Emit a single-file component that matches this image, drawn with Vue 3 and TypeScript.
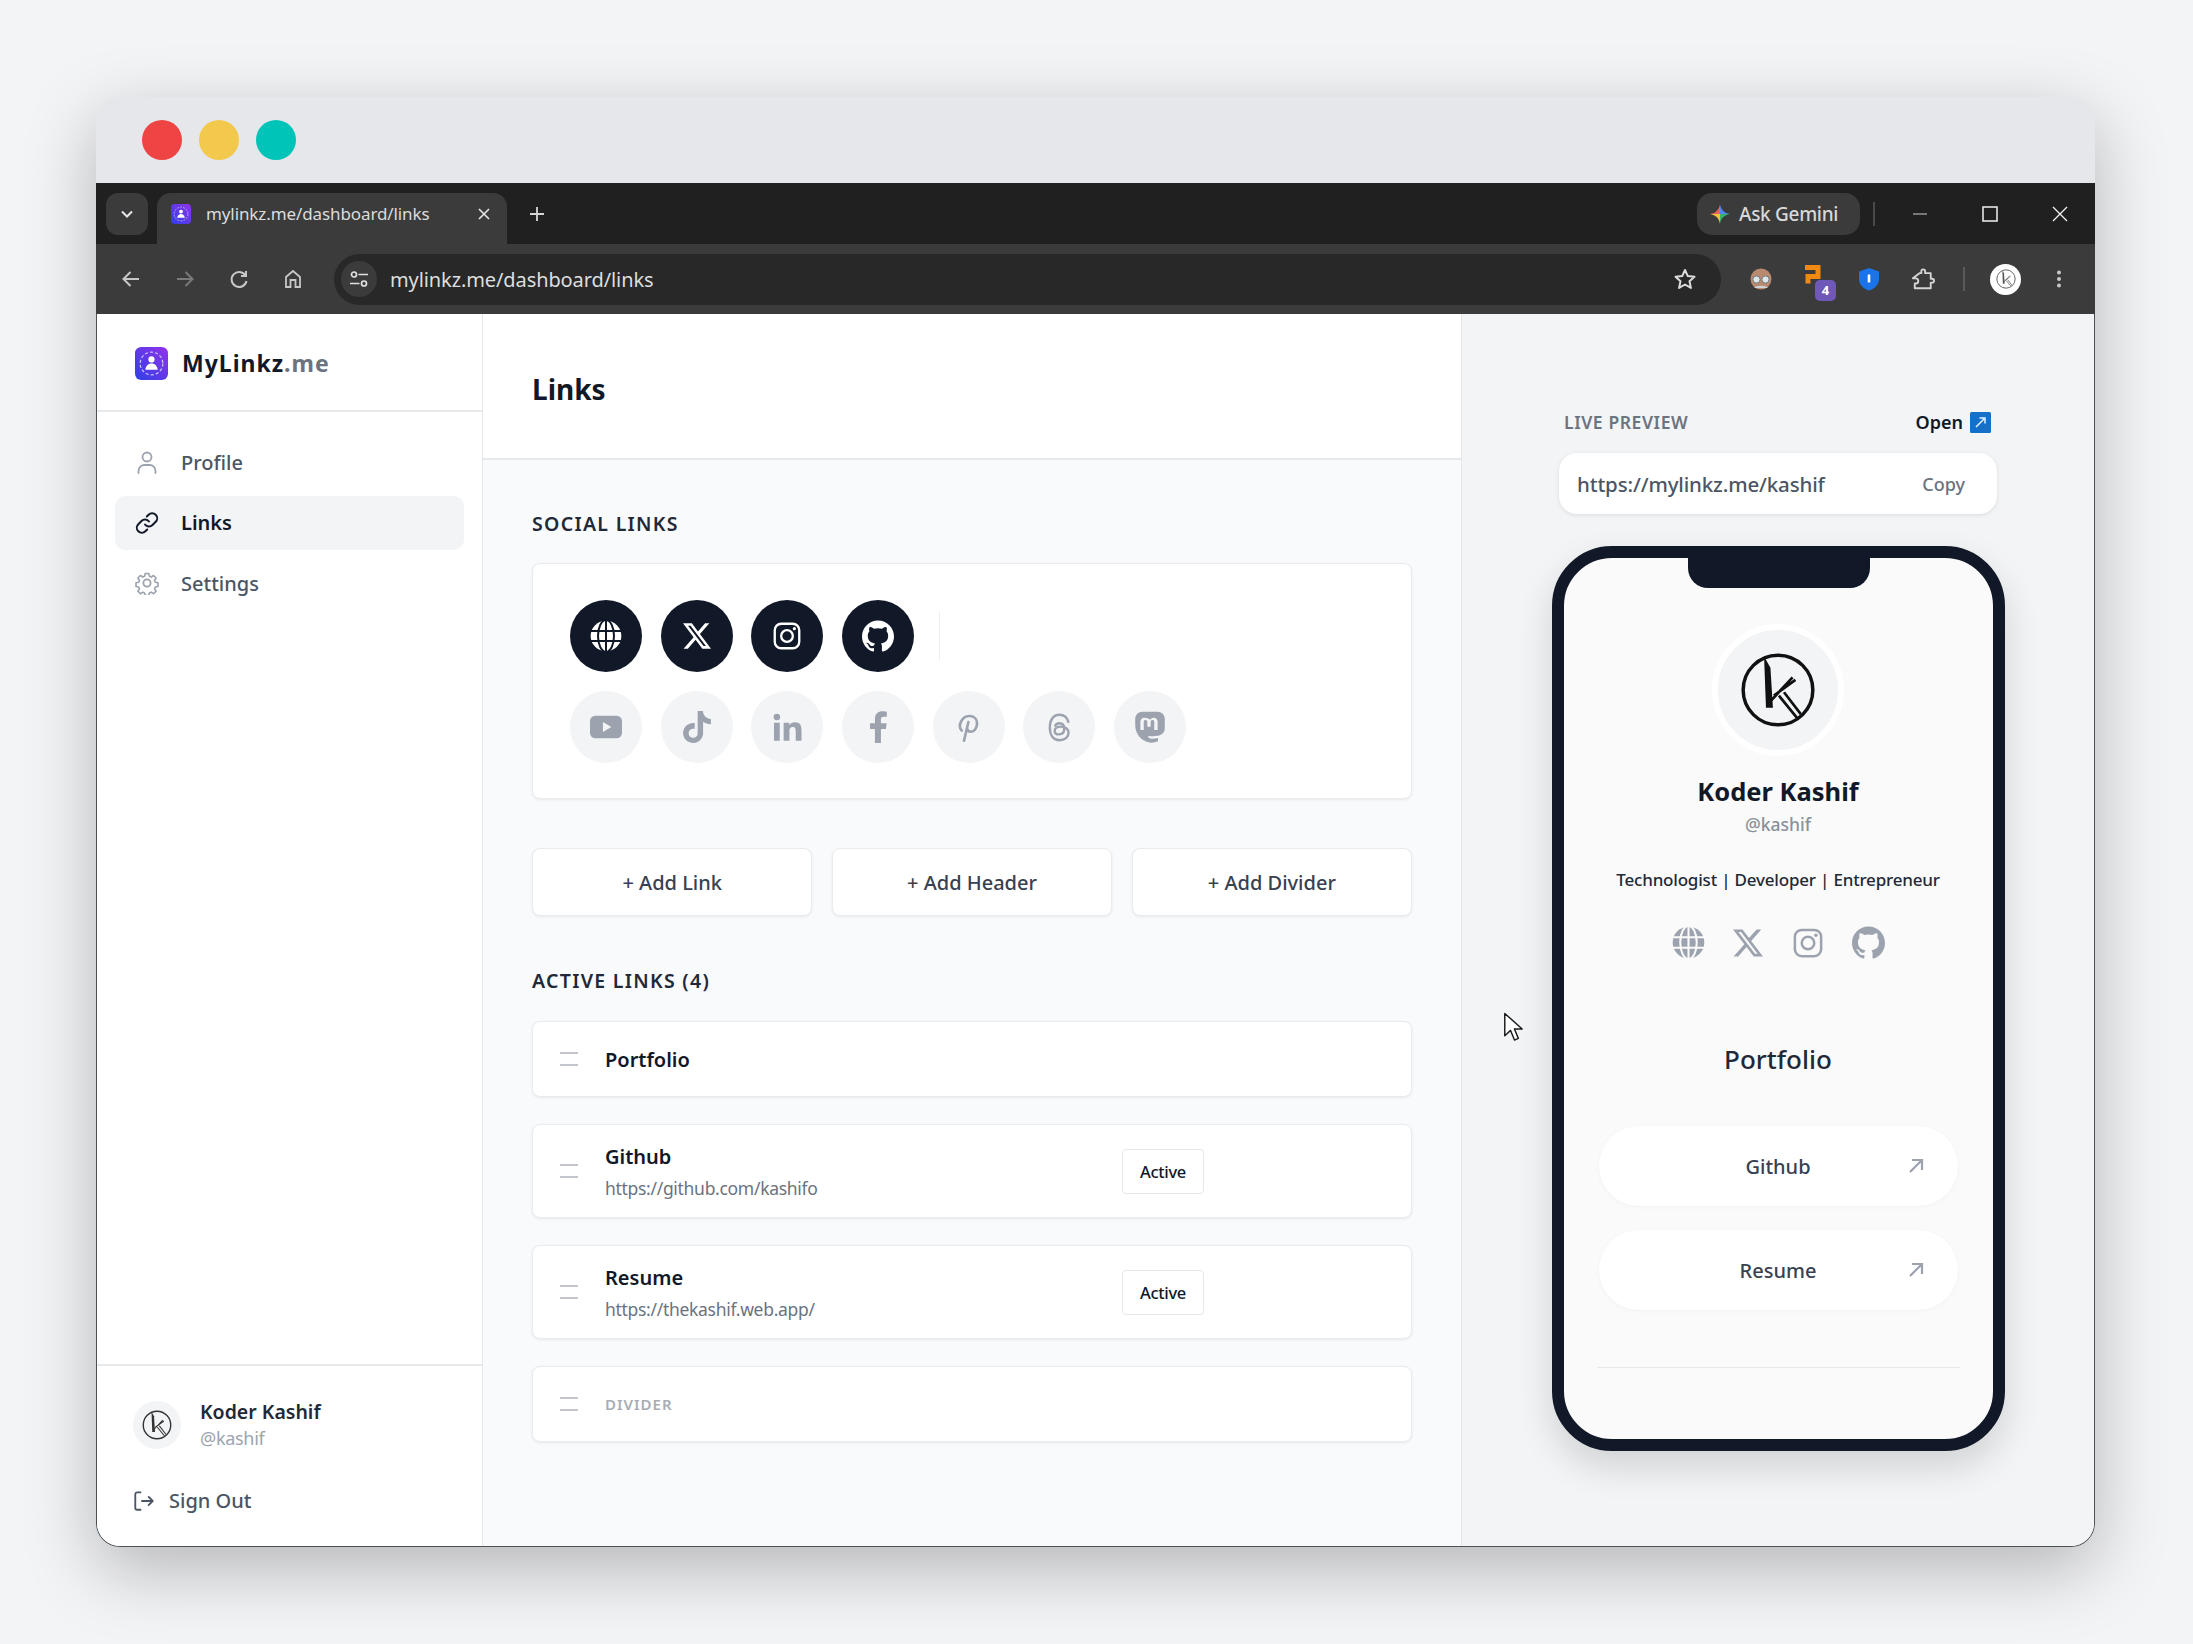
<script setup lang="ts">
const activeSocials = ["globe", "x", "insta", "github"];
const idleSocials = ["youtube", "tiktok", "linkedin", "facebook", "pinterest", "threads", "mastodon"];
const addButtons = ["+ Add Link", "+ Add Header", "+ Add Divider"];

const navItems = [
  { label: "Profile", icon: "user", active: false },
  { label: "Links", icon: "link", active: true },
  { label: "Settings", icon: "gear", active: false },
];

const links = [
  { title: "Github", url: "https://github.com/kashifo" },
  { title: "Resume", url: "https://thekashif.web.app/" },
];
</script>

<template>
  <div class="page">
    <svg class="defs" width="0" height="0" aria-hidden="true">
      <defs>
        <linearGradient id="logo-grad" x1="1" y1="0" x2="0" y2="1">
          <stop offset="0" stop-color="#9333ea" />
          <stop offset="1" stop-color="#2f3fe6" />
        </linearGradient>
        <symbol id="logo" viewBox="0 0 32 32">
          <rect width="32" height="32" rx="6" fill="url(#logo-grad)" />
          <circle cx="16" cy="16" r="11" fill="none" stroke="#c9c6fb" stroke-width="1.2" stroke-dasharray="3 2" />
          <circle cx="16" cy="12" r="3" fill="#fff" />
          <path d="M10 22c.5-4 3-6 6-6s5.500 2 6 6z" fill="#fff" />
        </symbol>
        <symbol id="globe" viewBox="0 0 24 24">
          <circle cx="12" cy="12" r="11.500" fill="currentColor" />
          <g fill="none" stroke="var(--cut)" stroke-width="1.500">
            <path d="M0 8.200h24M0 15.800h24M12 0v24" />
            <ellipse cx="12" cy="12" rx="6" ry="12" />
          </g>
        </symbol>
        <symbol id="x" viewBox="0 0 24 24">
          <path fill="currentColor" d="M18.901 1.153h3.68l-8.04 9.19L24 22.846h-7.406l-5.8-7.584-6.638 7.584H.474l8.6-9.83L0 1.154h7.594l5.243 6.932ZM17.610 20.644h2.039L6.486 3.240H4.298Z" />
        </symbol>
        <symbol id="insta" viewBox="0 0 24 24">
          <rect x="1.500" y="1.500" width="21" height="21" rx="5.500" fill="none" stroke="currentColor" stroke-width="2" />
          <circle cx="12" cy="12" r="5" fill="none" stroke="currentColor" stroke-width="2" />
          <circle cx="18.300" cy="5.700" r="1.400" fill="currentColor" />
        </symbol>
        <symbol id="github" viewBox="0 0 24 24">
          <path fill="currentColor" d="M12 .297c-6.630 0-12 5.373-12 12 0 5.303 3.438 9.800 8.205 11.385.6.113.82-.258.82-.577 0-.285-.01-1.040-.015-2.040-3.338.724-4.042-1.610-4.042-1.610C4.422 18.070 3.633 17.700 3.633 17.700c-1.087-.744.084-.729.084-.729 1.205.084 1.838 1.236 1.838 1.236 1.070 1.835 2.809 1.305 3.495.998.108-.776.417-1.305.76-1.605-2.665-.3-5.466-1.332-5.466-5.930 0-1.310.465-2.380 1.235-3.220-.135-.303-.54-1.523.105-3.176 0 0 1.005-.322 3.300 1.230.96-.267 1.980-.399 3-.405 1.020.006 2.040.138 3 .405 2.280-1.552 3.285-1.230 3.285-1.230.645 1.653.24 2.873.12 3.176.765.84 1.230 1.910 1.230 3.220 0 4.610-2.805 5.625-5.475 5.920.42.36.81 1.096.81 2.220 0 1.606-.015 2.896-.015 3.286 0 .315.21.69.825.57C20.565 22.092 24 17.592 24 12.297c0-6.627-5.373-12-12-12" />
        </symbol>
        <symbol id="youtube" viewBox="0 0 24 24">
          <path fill="currentColor" fill-rule="evenodd" d="M4 3.500h16a4 4 0 0 1 4 4v9a4 4 0 0 1-4 4H4a4 4 0 0 1-4-4v-9a4 4 0 0 1 4-4zM9.700 8.300v7.400L16 12z" />
        </symbol>
        <symbol id="tiktok" viewBox="0 0 24 24">
          <path fill="currentColor" d="M12.525.02c1.310-.02 2.610-.01 3.910-.02.08 1.530.63 3.090 1.750 4.170 1.120 1.110 2.700 1.620 4.240 1.790v4.030c-1.440-.05-2.890-.35-4.200-.97-.57-.26-1.100-.59-1.620-.93-.01 2.920.01 5.840-.02 8.750-.08 1.400-.54 2.790-1.350 3.940-1.310 1.920-3.580 3.170-5.910 3.210-1.430.08-2.860-.31-4.080-1.030-2.020-1.190-3.440-3.370-3.650-5.710-.02-.5-.03-1-.01-1.490.18-1.900 1.120-3.720 2.580-4.960 1.660-1.440 3.980-2.130 6.150-1.720.02 1.480-.04 2.960-.04 4.440-.99-.32-2.150-.23-3.020.37-.63.41-1.110 1.040-1.360 1.750-.21.51-.15 1.070-.14 1.610.24 1.640 1.820 3.020 3.500 2.870 1.120-.01 2.190-.66 2.770-1.610.19-.33.4-.67.41-1.060.1-1.790.06-3.570.07-5.360.01-4.030-.01-8.050.02-12.070z" />
        </symbol>
        <symbol id="linkedin" viewBox="0 0 24 24">
          <circle cx="3.200" cy="3.400" r="2.700" fill="currentColor" />
          <path fill="currentColor" d="M.8 8h4.800v15H.8zM8.800 8h4.600v2.100c.8-1.400 2.400-2.500 4.600-2.500 4.500 0 5.600 2.900 5.600 6.900V23h-4.800v-7.600c0-1.800-.1-3.800-2.400-3.800-2.400 0-2.800 1.800-2.800 3.700V23H8.800z" />
        </symbol>
        <symbol id="facebook" viewBox="0 0 24 24">
          <path fill="currentColor" d="M14.200 24V13.500h3.700l.6-4.300h-4.300V6.500c0-1.200.4-2.100 2.200-2.100h2.200V.5C18.200.4 16.900.2 15.400.2c-3.300 0-5.700 2-5.700 5.800v3.200H6v4.300h3.700V24z" />
        </symbol>
        <symbol id="pinterest" viewBox="0 0 24 24">
          <path fill="none" stroke="currentColor" stroke-width="2.200" stroke-linecap="round" d="M6.400 14.500C4.700 12.800 4.600 9.600 5.900 7c1.500-3 4.300-4.700 7.300-4.500 3.700.3 6 2.900 5.900 6.300-.1 3.700-2.400 6.900-5.300 6.700-1.700-.1-2.800-1.300-3-2.700M11.900 7.500 8.300 23" />
        </symbol>
        <symbol id="threads" viewBox="0 0 24 24">
          <path fill="none" stroke="currentColor" stroke-width="2" stroke-linecap="round" d="M19.300 7.400C18.300 3.800 15.600 1.500 12 1.500 6.900 1.500 4 5.700 4 12s2.900 10.500 8 10.500c4.400 0 7.500-2.600 7.500-6 0-3.300-2.800-5.200-6.600-5.200-2.900 0-4.900 1.300-4.900 3.300s1.700 3.100 3.700 3.100c2.700 0 4.200-1.800 4.200-4.600 0-2.600-1.300-4.600-3.900-4.600-1.700 0-2.900.7-3.600 1.900" />
        </symbol>
        <symbol id="mastodon" viewBox="0 0 24 24">
          <path fill="currentColor" fill-rule="evenodd" d="M6.500.6h11c3.300 0 5.600 2.300 5.600 5.500v6.700c0 3.300-2.200 5.300-5.300 5.800-2.400.4-5 .4-7.300-.1.100 1.400 1.100 2.300 3 2.300 1.600 0 3.100-.2 4.500-.6v2.500c-2.100 1-4.900 1.300-7.200.8C6 22 3.400 19.600 1.800 15.400 1 13.500.9 11.100.9 8.200V6.100C.9 2.900 3.200.6 6.500.6zM7.700 5c-1.800 0-2.900 1.300-2.900 3.100v6.200h2.500V8.300c0-1 .5-1.500 1.300-1.500.9 0 1.400.6 1.400 1.700v3.300h2.500V8.500c0-1.100.5-1.700 1.400-1.700.8 0 1.300.5 1.300 1.500v6h2.500V8.100C17.700 6.300 16.600 5 14.800 5c-1.300 0-2.100.6-2.600 1.500C11.700 5.600 9.100 5 7.700 5z" />
        </symbol>
        <symbol id="user" viewBox="0 0 24 24">
          <g fill="none" stroke="currentColor" stroke-width="1.800" stroke-linecap="round">
            <circle cx="12" cy="7" r="4.500" />
            <path d="M3.500 23v-2c0-3.500 2.800-6 6-6h5c3.200 0 6 2.500 6 6v2" />
          </g>
        </symbol>
        <symbol id="link" viewBox="0 0 24 24">
          <g fill="none" stroke="currentColor" stroke-width="2" stroke-linecap="round" stroke-linejoin="round">
            <path d="M10 13.500a5 5 0 0 0 7.500.5l3.200-3.200a5 5 0 0 0-7.100-7.100L11.800 5.500" />
            <path d="M14 10.500a5 5 0 0 0-7.500-.5l-3.200 3.200a5 5 0 0 0 7.100 7.100l1.800-1.800" />
          </g>
        </symbol>
        <symbol id="gear" viewBox="0 0 24 24">
          <g fill="none" stroke="currentColor" stroke-width="1.800" stroke-linejoin="round">
            <path d="M10 1.500h4l.7 3.100 1.900.8 2.700-1.700 2.800 2.800-1.700 2.700.8 1.900 3 .7v4l-3 .7-.8 1.900 1.700 2.700-2.800 2.800-2.700-1.700-1.900.8-.7 3h-4l-.7-3-1.900-.8-2.700 1.700-2.800-2.800 1.700-2.700-.8-1.900-3-.7v-4l3-.7.8-1.900-1.700-2.700 2.800-2.800 2.700 1.700 1.900-.8z" transform="translate(1.200 1.200) scale(.9)" />
            <circle cx="12" cy="12" r="3.600" />
          </g>
        </symbol>
        <symbol id="kay" viewBox="0 0 24 24">
          <circle cx="12" cy="12" r="11" fill="none" stroke="currentColor" stroke-width="1.100" />
          <path fill="currentColor" d="M7.600 1.400 9.600 5l.8 12.600H8.200z" />
          <g fill="none" stroke="currentColor" stroke-width=".85">
            <path d="M9.200 16 16.600 8M10.700 13.800 17.500 8.800M12.300 13.800 18 20.800M13.900 12.700 19.200 19.600" />
          </g>
        </symbol>
      </defs>
    </svg>

    <div class="window">
      <div class="titlebar">
        <span class="dot red"></span>
        <span class="dot yellow"></span>
        <span class="dot teal"></span>
      </div>

      <div class="tabstrip">
        <div class="tab-search">
          <svg viewBox="0 0 16 16" width="16" height="16"><path d="M3 5.500l5 5 5-5" fill="none" stroke="#e3e6ea" stroke-width="2" /></svg>
        </div>
        <div class="tab">
          <svg class="tab-favicon" width="20" height="20"><use href="#logo" /></svg>
          <span class="tab-title">mylinkz.me/dashboard/links</span>
          <svg viewBox="0 0 12 12" width="12" height="12"><path d="M1 1l10 10M11 1L1 11" stroke="#e3e3e3" stroke-width="1.700" /></svg>
        </div>
        <svg class="tab-plus" viewBox="0 0 16 16" width="16" height="16"><path d="M8 1v14M1 8h14" stroke="#d5d5d5" stroke-width="1.800" /></svg>
        <div class="grow"></div>
        <div class="gemini">
          <svg viewBox="0 0 24 24" width="22" height="22">
            <path d="M12 1c.8 6 4.500 10 11 11H12z" fill="#4f86f7" />
            <path d="M12 1c-.8 6-4.500 10-11 11h11z" fill="#e8645a" />
            <path d="M1 12c6.500 1 10.200 5 11 11V12z" fill="#f3c23c" />
            <path d="M23 12c-6.500 1-10.200 5-11 11V12z" fill="#37b36b" />
          </svg>
          <span>Ask Gemini</span>
        </div>
        <span class="strip-sep"></span>
        <div class="win-ctl first">
          <svg viewBox="0 0 16 16" width="16" height="16"><path d="M1 8h14" stroke="#8f8f8f" stroke-width="1.600" /></svg>
        </div>
        <div class="win-ctl">
          <svg viewBox="0 0 16 16" width="16" height="16"><rect x="1" y="1" width="14" height="14" fill="none" stroke="#f2f2f2" stroke-width="1.500" /></svg>
        </div>
        <div class="win-ctl">
          <svg viewBox="0 0 16 16" width="16" height="16"><path d="M1 1l14 14M15 1L1 15" stroke="#f2f2f2" stroke-width="1.300" /></svg>
        </div>
      </div>

      <div class="toolbar">
        <div class="tool-btn">
          <svg viewBox="0 0 20 20" width="20" height="20"><path d="M18 10H3M9.500 3 2.500 10l7 7" fill="none" stroke="#c7c7c7" stroke-width="2" /></svg>
        </div>
        <div class="tool-btn">
          <svg viewBox="0 0 20 20" width="20" height="20"><path d="M2 10h15M10.500 3l7 7-7 7" fill="none" stroke="#7a7a7a" stroke-width="2" /></svg>
        </div>
        <div class="tool-btn">
          <svg viewBox="0 0 20 20" width="20" height="20"><path d="M16.500 6.500A7.500 7.500 0 1 0 17.500 12M17 2v5h-5" fill="none" stroke="#c7c7c7" stroke-width="2" /></svg>
        </div>
        <div class="tool-btn">
          <svg viewBox="0 0 20 20" width="20" height="20"><path d="M3 18V8l7-6 7 6v10h-4.500v-7h-5v7z" fill="none" stroke="#c7c7c7" stroke-width="1.800" /></svg>
        </div>
        <div class="omnibox">
          <div class="tune">
            <svg viewBox="0 0 20 20" width="20" height="20">
              <g fill="none" stroke="#e0e0e0" stroke-width="1.700">
                <circle cx="5" cy="5.500" r="2.500" /><path d="M9.500 5.500H19M1 14.500h9.500" /><circle cx="15" cy="14.500" r="2.500" />
              </g>
            </svg>
          </div>
          <span class="omni-url">mylinkz.me/dashboard/links</span>
          <div class="grow"></div>
          <svg class="omni-star" viewBox="0 0 24 24" width="24" height="24"><path d="M12 3l2.800 6.100 6.700.7-5 4.500 1.400 6.600-5.900-3.400-5.900 3.400 1.400-6.600-5-4.500 6.700-.7z" fill="none" stroke="#dcdcdc" stroke-width="2" stroke-linejoin="round" /></svg>
        </div>
        <div class="ext first">
          <svg viewBox="0 0 24 24" width="24" height="24">
            <circle cx="12" cy="12" r="10.500" fill="#b98a70" />
            <circle cx="7.500" cy="12.500" r="3.600" fill="#dfe7e8" stroke="#6b7f86" />
            <circle cx="16.500" cy="12.500" r="3.600" fill="#dfe7e8" stroke="#6b7f86" />
            <path d="M5 21c2-3 12-3 14 0z" fill="#cfd6d8" />
          </svg>
        </div>
        <div class="ext">
          <svg class="ext-a" viewBox="0 0 24 24" width="24" height="24"><path d="M5 3.500h13v9H8v7" fill="none" stroke="#f08a13" stroke-width="5" /></svg>
          <span class="ext-badge">4</span>
        </div>
        <div class="ext">
          <svg viewBox="0 0 24 24" width="24" height="24"><path d="M12 1l10 3.500v7c0 6-4 10-10 12C6 21.500 2 17.500 2 11.500v-7z" fill="#1a73e8" /><path d="M12 7.500v8" stroke="#fff" stroke-width="2.600" /></svg>
        </div>
        <div class="ext">
          <svg viewBox="0 0 24 24" width="24" height="24"><path d="M9 5.500h2V3.500a2 2 0 0 1 4 0v2h6v6h1.500a2 2 0 0 1 0 4H21v6H4v-5h1a2.500 2.500 0 0 0 0-5.500H2z" transform="translate(0 1) scale(.94)" fill="none" stroke="#d4d4d4" stroke-width="2" stroke-linejoin="round" /></svg>
        </div>
        <span class="tool-sep"></span>
        <div class="profile">
          <svg width="20" height="20"><use href="#kay" /></svg>
        </div>
        <div class="ext">
          <svg viewBox="0 0 6 20" width="6" height="20"><g fill="#c7c7c7"><circle cx="3" cy="3.500" r="2" /><circle cx="3" cy="10" r="2" /><circle cx="3" cy="16.500" r="2" /></g></svg>
        </div>
      </div>

      <div class="app">
        <aside class="sidebar">
          <div class="brand">
            <svg width="33" height="33"><use href="#logo" /></svg>
            <span class="brand-name">MyLinkz<em>.me</em></span>
          </div>
          <nav class="nav">
            <a v-for="n in navItems" :key="n.label" :class="['nav-item', { active: n.active }]">
              <svg width="24" height="24"><use :href="'#' + n.icon" /></svg>
              <span>{{ n.label }}</span>
            </a>
          </nav>
          <div class="side-foot">
            <div class="me">
              <div class="me-avatar"><svg width="30" height="30"><use href="#kay" /></svg></div>
              <div>
                <div class="me-name">Koder Kashif</div>
                <div class="me-handle">@kashif</div>
              </div>
            </div>
            <a class="signout">
              <svg viewBox="0 0 24 24" width="22" height="22"><path d="M9 2.500H4.500a2 2 0 0 0-2 2v15a2 2 0 0 0 2 2H9M9 12h12M16.500 7l5 5-5 5" fill="none" stroke="#4b5563" stroke-width="2" stroke-linejoin="round" /></svg>
              <span>Sign Out</span>
            </a>
          </div>
        </aside>

        <main class="main">
          <header class="main-head"><h1>Links</h1></header>
          <div class="main-body">
            <h2 class="section-title">SOCIAL LINKS</h2>
            <section class="card socials">
              <div class="social-row">
                <span v-for="s in activeSocials" :key="s" class="social on">
                  <svg :class="'ic-' + s"><use :href="'#' + s" /></svg>
                </span>
                <span class="social-sep"></span>
              </div>
              <div class="social-row">
                <span v-for="s in idleSocials" :key="s" class="social">
                  <svg :class="'ic-' + s"><use :href="'#' + s" /></svg>
                </span>
              </div>
            </section>

            <div class="adders">
              <button v-for="b in addButtons" :key="b" class="card adder">{{ b }}</button>
            </div>

            <h2 class="section-title second">ACTIVE LINKS (4)</h2>
            <div class="rows">
              <div class="card row short">
                <span class="grip"></span>
                <span class="row-title">Portfolio</span>
              </div>
              <div v-for="l in links" :key="l.title" class="card row tall">
                <span class="grip"></span>
                <div class="row-text">
                  <div class="row-title">{{ l.title }}</div>
                  <div class="row-url">{{ l.url }}</div>
                </div>
                <button class="active-btn">Active</button>
              </div>
              <div class="card row short">
                <span class="grip"></span>
                <span class="row-divider">DIVIDER</span>
              </div>
            </div>
          </div>
        </main>

        <aside class="preview">
          <div class="preview-head">
            <span class="preview-label">LIVE PREVIEW</span>
            <a class="preview-open">
              Open
              <svg viewBox="0 0 21 21" width="21" height="21">
                <rect width="21" height="21" rx="1.500" fill="#1470c8" />
                <path d="M6 15l8-8M9.500 6H15v5.500" fill="none" stroke="#e8f2fb" stroke-width="1.500" />
              </svg>
            </a>
          </div>
          <div class="url-box">
            <span class="url-text">https://mylinkz.me/kashif</span>
            <span class="url-copy">Copy</span>
          </div>

          <div class="phone">
            <div class="notch"></div>
            <div class="avatar"><svg width="76" height="76"><use href="#kay" /></svg></div>
            <div class="p-name">Koder Kashif</div>
            <div class="p-handle">@kashif</div>
            <div class="p-bio">Technologist | Developer | Entrepreneur</div>
            <div class="p-icons">
              <span v-for="s in activeSocials" :key="s" class="p-icon">
                <svg :class="'pi-' + s"><use :href="'#' + s" /></svg>
              </span>
            </div>
            <div class="p-header">Portfolio</div>
            <div v-for="l in links" :key="l.title" class="p-link">
              <span>{{ l.title }}</span>
              <svg class="p-arrow" viewBox="0 0 16 16" width="16" height="16"><path d="M2 14 14 2M4 2h10v10" fill="none" stroke="#9ca3af" stroke-width="2.200" /></svg>
            </div>
            <div class="p-rule"></div>
          </div>
        </aside>
      </div>

      <svg class="cursor" viewBox="0 0 20 32" width="20" height="31">
        <path d="M1.500 1.500v23l6-5.500 4 10 4-1.800-4-9.700h8z" fill="#fff" stroke="#1b1b1b" stroke-width="1.500" stroke-linejoin="round" />
      </svg>
    </div>
  </div>
</template>

<style>
html, body { margin: 0; background: #f3f4f6; }
</style>

<style scoped>
.page {
  width: 2193px;
  height: 1644px;
  padding: 97px 98px 97px 96px;
  box-sizing: border-box;
  background: #f3f4f6;
  font-family: "Noto Sans", "Open Sans", sans-serif;
  overflow: hidden;
}
.defs { position: absolute; }
.grow { flex: 1; }

.window {
  position: relative;
  height: 1450px;
  border-radius: 24px;
  display: flex;
  flex-direction: column;
  background: #e5e7eb;
  box-shadow: 0 22px 70px rgba(0, 0, 0, 0.26);
}

.titlebar {
  height: 86px;
  display: flex;
  align-items: center;
  gap: 17px;
  padding-left: 46px;
  background: #e5e7eb;
  border-radius: 24px 24px 0 0;
}
.dot { width: 40px; height: 40px; border-radius: 50%; }
.red { background: #ef4444; }
.yellow { background: #f2c94c; }
.teal { background: #00c4b8; }

.tabstrip {
  height: 61px;
  box-sizing: border-box;
  padding-top: 10px;
  padding-left: 10px;
  display: flex;
  align-items: flex-start;
  background: #202020;
  color: #e3e3e3;
}
.tab-search {
  width: 42px;
  height: 42px;
  margin-right: 9px;
  border-radius: 12px;
  background: #3b3b3b;
  display: flex;
  align-items: center;
  justify-content: center;
}
.tab {
  width: 350px;
  height: 51px;
  box-sizing: border-box;
  padding: 0 17px 10px 14px;
  display: flex;
  align-items: center;
  border-radius: 14px 14px 0 0;
  background: #3b3b3b;
  font-size: 17px;
}
.tab-title { margin-left: 15px; flex: 1; color: #dcdcdc; letter-spacing: -0.1px; }
.tab-plus { margin: 13px 0 0 22px; }
.gemini {
  height: 42px;
  padding: 0 0 0 12px;
  box-sizing: border-box;
  width: 163px;
  display: flex;
  align-items: center;
  gap: 8px;
  border-radius: 15px;
  background: #3b3b3b;
  font-size: 19px;
  font-weight: 500;
  color: #d8d8d8;
  letter-spacing: -0.3px;
  white-space: nowrap;
}
.strip-sep { width: 2px; height: 24px; margin: 9px 0 0 13px; background: #4a4a4a; }
.win-ctl {
  width: 70px;
  height: 42px;
  display: flex;
  align-items: center;
  justify-content: center;
}
.win-ctl.first { margin-left: 10px; }

.toolbar {
  height: 70px;
  box-sizing: border-box;
  padding-left: 17px;
  display: flex;
  align-items: center;
  gap: 18px;
  background: #3b3b3b;
}
.tool-btn, .ext {
  position: relative;
  width: 36px;
  height: 36px;
  flex: none;
  display: flex;
  align-items: center;
  justify-content: center;
}
.ext.first { margin-left: 2px; }
.omnibox {
  width: 1387px;
  height: 51px;
  margin-left: 5px;
  margin-right: 2px;
  box-sizing: border-box;
  padding: 0 24px 0 7px;
  display: flex;
  align-items: center;
  flex: none;
  border-radius: 26px;
  background: #282828;
}
.tune {
  width: 36px;
  height: 36px;
  border-radius: 50%;
  background: #3b3b3b;
  display: flex;
  align-items: center;
  justify-content: center;
}
.omni-url { margin-left: 13px; font-size: 20px; color: #dedede; letter-spacing: -0.1px; }
.ext-a { margin: -6px 0 0 -6px; }
.ext-badge {
  position: absolute;
  right: -3px;
  bottom: -4px;
  width: 21px;
  height: 21px;
  border-radius: 5px;
  background: #7058b8;
  color: #fff;
  font-size: 13px;
  font-weight: 700;
  text-align: center;
  line-height: 21px;
}
.tool-sep { width: 2px; height: 24px; background: #5a5a5a; flex: none; margin: 0 2px 0 4px; }
.profile {
  width: 31px;
  height: 31px;
  margin-left: 5px;
  border-radius: 50%;
  flex: none;
  background: #fff;
  color: #555;
  display: flex;
  align-items: center;
  justify-content: center;
}
.profile + .ext { margin-left: 2px; }

.app {
  flex: 1;
  min-height: 0;
  display: flex;
  background: #fff;
  border: 1px solid #4b5155;
  border-top: 0;
  border-radius: 0 0 24px 24px;
  overflow: hidden;
}

.sidebar {
  width: 385px;
  flex: none;
  display: flex;
  flex-direction: column;
  border-right: 1px solid #e5e7eb;
  background: #fff;
}
.brand {
  height: 98px;
  box-sizing: border-box;
  padding: 2px 0 0 38px;
  display: flex;
  align-items: center;
  gap: 14px;
  border-bottom: 2px solid #e8e9eb;
}
.brand-name { font-size: 23px; font-weight: 700; color: #111827; letter-spacing: 1px; }
.brand-name em { font-style: normal; color: #6b7280; }
.nav {
  flex: 1;
  padding: 23px 18px 0;
  display: flex;
  flex-direction: column;
  gap: 6.500px;
}
.nav-item {
  height: 54px;
  padding-left: 20px;
  display: flex;
  align-items: center;
  gap: 22px;
  border-radius: 10px;
  font-size: 20px;
  font-weight: 500;
  color: #4b5563;
}
.nav-item svg { color: #9ca3af; }
.nav-item.active { background: #f3f4f6; color: #111827; font-weight: 600; }
.nav-item.active svg { color: #111827; }

.side-foot { border-top: 2px solid #e8e9eb; height: 182px; box-sizing: border-box; padding: 32px 36px 0; }
.me { display: flex; align-items: center; gap: 19px; }
.me-avatar {
  width: 48px;
  height: 48px;
  border-radius: 50%;
  background: #f3f4f6;
  color: #333;
  display: flex;
  align-items: center;
  justify-content: center;
}
.me-name { font-size: 19.500px; font-weight: 600; color: #1f2937; line-height: 27px; }
.me-handle { font-size: 18px; color: #9ca3af; line-height: 27px; letter-spacing: -0.3px; }
.signout {
  margin-top: 35px;
  display: flex;
  align-items: center;
  gap: 14px;
  font-size: 20px;
  font-weight: 500;
  color: #4b5563;
}

.main {
  width: 978px;
  flex: none;
  display: flex;
  flex-direction: column;
  background: #f9fafb;
}
.main-head {
  height: 146px;
  box-sizing: border-box;
  display: flex;
  align-items: center;
  padding: 5px 49px 0;
  background: #fff;
  border-bottom: 2px solid #e8e9eb;
}
h1 { margin: 0; font-size: 28px; font-weight: 700; color: #111827; }
.main-body { padding: 50px 49px 0; }
.section-title {
  margin: 0 0 25px;
  height: 28px;
  line-height: 28px;
  font-size: 19.500px;
  font-weight: 600;
  color: #1f2937;
  letter-spacing: 1.300px;
}
.section-title.second { margin: 51px 0 26px; }
.card {
  box-sizing: border-box;
  background: #fff;
  border: 1px solid #e9ebee;
  border-radius: 8px;
  box-shadow: 0 1px 3px rgba(0, 0, 0, 0.07);
}
.socials { height: 236px; padding: 36px 37px; display: flex; flex-direction: column; gap: 19px; }
.social-row { display: flex; gap: 18.700px; align-items: center; }
.social {
  width: 72px;
  height: 72px;
  border-radius: 50%;
  flex: none;
  background: #f3f4f6;
  color: #9ca3af;
  --cut: #f3f4f6;
  display: flex;
  align-items: center;
  justify-content: center;
}
.social.on { background: #111827; color: #fff; --cut: #111827; }
.social-sep { width: 1px; height: 48px; margin-left: 6px; background: #eceef0; }
.social svg { width: 32px; height: 32px; }
.social .ic-x, .social .ic-insta { width: 28px; height: 28px; }
.social .ic-linkedin, .social .ic-pinterest, .social .ic-threads { width: 29px; height: 29px; }
.adders { display: flex; gap: 19.500px; margin-top: 49px; }
.adder {
  flex: 1;
  height: 68px;
  font: 500 20px "Noto Sans", sans-serif;
  color: #374151;
}
.rows { display: flex; flex-direction: column; gap: 27px; }
.row { display: flex; align-items: center; padding: 0 27px; }
.row.short { height: 76px; }
.row.tall { height: 94px; }
.grip {
  width: 18px;
  height: 10px;
  flex: none;
  margin-right: 27px;
  border-top: 2px solid #c2c6cc;
  border-bottom: 2px solid #c2c6cc;
}
.row-title { font-size: 20px; font-weight: 600; color: #111827; line-height: 27px; }
.row-text { width: 517px; }
.row-url { margin-top: 6px; font-size: 17.500px; color: #6b7280; line-height: 24px; letter-spacing: -0.3px; }
.row-divider { font-size: 15px; font-weight: 600; color: #a8adb5; letter-spacing: 1px; }
.active-btn {
  width: 82px;
  height: 45px;
  background: #fff;
  border: 1px solid #e5e7eb;
  border-radius: 4px;
  font: 500 16.500px "Noto Sans", sans-serif;
  color: #111827;
  letter-spacing: -0.3px;
  padding: 0;
}

.preview {
  flex: 1;
  box-sizing: border-box;
  padding-top: 96px;
  display: flex;
  flex-direction: column;
  align-items: center;
  background: #f3f4f6;
  border-left: 1px solid #e5e7eb;
}
.preview-head {
  width: 427px;
  height: 24px;
  margin-left: -1px;
  display: flex;
  justify-content: space-between;
  align-items: center;
}
.preview-label { font-size: 17.500px; font-weight: 600; color: #6b7280; letter-spacing: 0.6px; }
.preview-open {
  display: flex;
  align-items: center;
  gap: 7px;
  font-size: 18px;
  font-weight: 600;
  color: #111827;
}
.url-box {
  width: 438px;
  height: 61px;
  margin-top: 19px;
  box-sizing: border-box;
  padding: 0 32px 0 18px;
  display: flex;
  align-items: center;
  justify-content: space-between;
  border-radius: 18px;
  background: #fff;
  box-shadow: 0 1px 4px rgba(0, 0, 0, 0.1);
}
.url-text { font-size: 20.500px; font-weight: 500; color: #4b5563; letter-spacing: -0.15px; }
.url-copy { font-size: 18px; font-weight: 500; color: #6b7280; }
.phone {
  position: relative;
  width: 453px;
  height: 905px;
  margin-top: 32px;
  box-sizing: border-box;
  padding: 66px 36px 0;
  display: flex;
  flex-direction: column;
  align-items: center;
  border: 12px solid #111827;
  border-radius: 60px;
  background: #fafafa;
  box-shadow: 0 16px 36px rgba(0, 0, 0, 0.14);
}
.notch {
  position: absolute;
  top: 0;
  left: 124px;
  width: 182px;
  height: 30px;
  border-radius: 0 0 20px 20px;
  background: #111827;
}
.avatar {
  width: 120px;
  height: 120px;
  border: 6px solid #fff;
  border-radius: 50%;
  background: #f3f4f6;
  color: #111;
  display: flex;
  align-items: center;
  justify-content: center;
}
.p-name { margin-top: 17px; font-size: 25.500px; font-weight: 700; color: #111827; line-height: 36px; }
.p-handle { margin-top: 3px; font-size: 17.500px; font-weight: 500; color: #8b9098; line-height: 24px; }
.p-bio { margin-top: 32px; font-size: 17px; font-weight: 500; color: #1f2937; line-height: 24px; letter-spacing: -0.2px; white-space: nowrap; }
.p-icons { margin-top: 34px; display: flex; gap: 27px; color: #9ca3af; --cut: #fafafa; }
.p-icon { width: 33px; height: 33px; display: flex; align-items: center; justify-content: center; }
.p-icon svg { width: 33px; height: 33px; }
.p-icon .pi-x, .p-icon .pi-insta { width: 30px; height: 30px; }
.p-header { margin-top: 82px; font-size: 26px; font-weight: 500; color: #1f2937; line-height: 36px; }
.p-link {
  position: relative;
  width: 359px;
  height: 80px;
  margin-top: 24px;
  flex: none;
  display: flex;
  align-items: center;
  justify-content: center;
  border-radius: 40px;
  background: #fff;
  box-shadow: 0 1px 4px rgba(0, 0, 0, 0.04);
  font-size: 20px;
  font-weight: 500;
  color: #374151;
}
.p-header + .p-link { margin-top: 49px; }
.p-arrow { position: absolute; right: 34px; top: 32px; }
.p-rule { width: 363px; height: 1px; margin-top: 57px; background: #e5e7eb; }

.cursor { position: absolute; left: 1407px; top: 915px; }
</style>
